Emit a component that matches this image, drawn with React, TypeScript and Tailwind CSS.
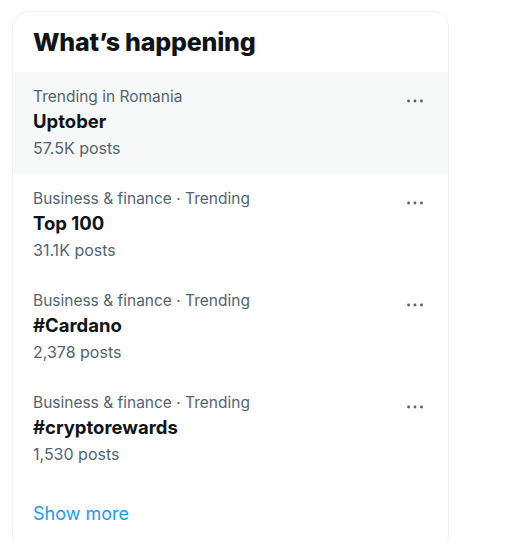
import React, { JSX } from "react";

type Trend = {
  category: string;
  title: string;
  posts: string;
  active?: boolean;
};

const trends: Trend[] = [
  { category: "Trending in Romania", title: "Uptober", posts: "57.5K posts", active: true },
  { category: "Business & finance · Trending", title: "Top 100", posts: "31.1K posts" },
  { category: "Business & finance · Trending", title: "#Cardano", posts: "2,378 posts" },
  { category: "Business & finance · Trending", title: "#cryptorewards", posts: "1,530 posts" },
];

const MoreIcon = (): JSX.Element => (
  <svg viewBox="0 0 24 24" className="w-[22px] h-[22px] fill-[#536471]">
    <circle cx="5" cy="12" r="1.6" />
    <circle cx="12" cy="12" r="1.6" />
    <circle cx="19" cy="12" r="1.6" />
  </svg>
);

export default function App(): JSX.Element {
  return (
    <div className="w-[527px] h-[542px] bg-white overflow-hidden font-['Inter','Noto_Sans',sans-serif]">
      <div className="ml-3 mt-[11px] w-[437px] h-[540px] border border-[#eff3f4] rounded-2xl overflow-hidden">
        <h2 className="h-[60px] pl-5 pt-[14px] text-[25px] leading-[32px] font-extrabold text-[#0f1419] tracking-[-0.2px]">
          What’s happening
        </h2>

        {trends.map((t, i) => (
          <div
            key={i}
            className={`flex justify-between h-[102px] pl-5 pr-[22px] pt-[13px] ${t.active ? "bg-[#f7f9f9]" : ""}`}
          >
            <div className="flex flex-col">
              <span className="text-[15.5px] leading-[23px] text-[#536471]">{t.category}</span>
              <span className="text-[18.5px] leading-[27px] font-bold text-[#0f1419]">{t.title}</span>
              <span className="text-[16px] leading-[27px] text-[#536471]">{t.posts}</span>
            </div>
            <div className="pt-[5px]">
              <MoreIcon />
            </div>
          </div>
        ))}

        <div className="pl-5 pt-[21px] text-[18px] leading-[26px] text-[#1d9bf0]">Show more</div>
      </div>
    </div>
  );
}
